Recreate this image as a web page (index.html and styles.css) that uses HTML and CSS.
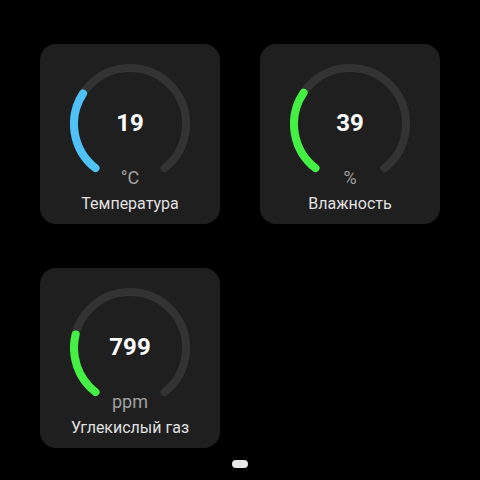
FILE: index.html
```html
<!DOCTYPE html>
<html>
<head>
<meta charset="utf-8">
<link rel="stylesheet" href="styles.css">
</head>
<body>
<div class="page">
  <div class="grid">
    <div class="card">
      <div class="gauge">
        <svg width="120" height="120" viewBox="0 0 120 120">
          <path class="track" d="M25.52 104.13 A56 56 0 1 1 94.48 104.13"/>
          <path class="fill blue" d="M25.52 104.13 A56 56 0 0 1 13.03 29.50"/>
        </svg>
        <div class="value">19</div>
        <div class="unit">°C</div>
      </div>
      <div class="label">Температура</div>
    </div>
    <div class="card">
      <div class="gauge">
        <svg width="120" height="120" viewBox="0 0 120 120">
          <path class="track" d="M25.52 104.13 A56 56 0 1 1 94.48 104.13"/>
          <path class="fill green" d="M25.52 104.13 A56 56 0 0 1 13.58 28.68"/>
        </svg>
        <div class="value">39</div>
        <div class="unit">%</div>
      </div>
      <div class="label">Влажность</div>
    </div>
    <div class="card">
      <div class="gauge">
        <svg width="120" height="120" viewBox="0 0 120 120">
          <path class="track" d="M25.52 104.13 A56 56 0 1 1 94.48 104.13"/>
          <path class="fill green" d="M25.52 104.13 A56 56 0 0 1 5.66 46.45"/>
        </svg>
        <div class="value">799</div>
        <div class="unit">ppm</div>
      </div>
      <div class="label">Углекислый газ</div>
    </div>
  </div>
  <div class="dots"><span class="dot"></span></div>
</div>
</body>
</html>
```
FILE: styles.css
```css
html, body {
  margin: 0;
  padding: 0;
  background: #000;
}
body {
  width: 480px;
  height: 480px;
  overflow: hidden;
  font-family: Roboto, "Noto Sans", sans-serif;
}
.page {
  display: flex;
  flex-direction: column;
  height: 480px;
}
.grid {
  display: grid;
  grid-template-columns: 180px 180px;
  grid-auto-rows: 180px;
  gap: 44px 40px;
  padding: 44px 40px 0;
}
.card {
  background: #1f1f1f;
  border-radius: 16px;
  display: flex;
  flex-direction: column;
  align-items: center;
}
.gauge {
  position: relative;
  width: 120px;
  height: 120px;
  margin-top: 20px;
}
.gauge svg {
  display: block;
}
.track {
  fill: none;
  stroke: #333333;
  stroke-width: 8;
  stroke-linecap: round;
}
.fill {
  fill: none;
  stroke-width: 8;
  stroke-linecap: round;
}
.blue { stroke: #4fc3f7; }
.green { stroke: #45f045; }
.value {
  position: absolute;
  left: 0;
  right: 0;
  top: 47px;
  text-align: center;
  font-size: 24px;
  line-height: 24px;
  font-weight: 700;
  color: #ffffff;
}
.unit {
  position: absolute;
  left: 0;
  right: 0;
  top: 105px;
  text-align: center;
  font-size: 18px;
  line-height: 18px;
  color: #a0a0a0;
}
.label {
  margin-top: 10px;
  font-size: 16px;
  line-height: 20px;
  color: #e0e0e0;
}
.dots {
  display: flex;
  justify-content: center;
  margin-top: 12px;
}
.dot {
  width: 16px;
  height: 8px;
  border-radius: 4px;
  background: #e8e8e8;
}
```
